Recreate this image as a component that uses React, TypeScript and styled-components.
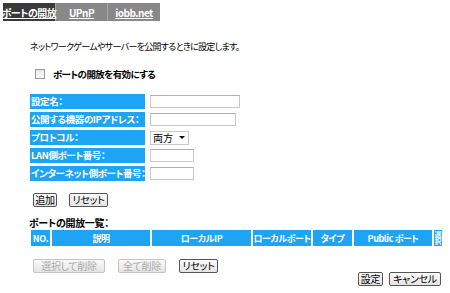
import React from 'react'
import styled, { createGlobalStyle } from 'styled-components'

const GlobalStyle = createGlobalStyle`
  html, body {
    margin: 0;
    padding: 0;
    background: #fff;
    font-family: "Noto Sans CJK JP", "Liberation Sans", sans-serif;
    font-size: 10px;
    font-feature-settings: "palt";
    color: #000;
  }
`

const Page = styled.div`
  width: 450px;
  height: 293px;
  padding: 3px 0 0 3px;
  box-sizing: border-box;
  overflow: hidden;
  white-space: nowrap;
`

const TabBar = styled.div`
  display: flex;
  width: 157px;
  height: 18px;
  background: #888;
`

const Tab = styled.a<{ $active?: boolean; $w: number }>`
  width: ${(p) => p.$w}px;
  display: flex;
  align-items: center;
  justify-content: center;
  background: ${(p) => (p.$active ? '#3a3a3a' : 'transparent')};
  color: #fff;
  font-weight: bold;
  font-size: 10px;
  letter-spacing: -0.5px;
  text-decoration: underline;
  border-right: 1px solid #a8a8a8;
  box-sizing: border-box;
  &:last-child {
    border-right: none;
  }
`

const Content = styled.div`
  padding-left: 27px;
`

const Intro = styled.p`
  margin: 20px 0 0 0;
  font-size: 9px;
  line-height: 12px;
  letter-spacing: -0.7px;
`

const CheckRow = styled.label`
  display: flex;
  align-items: center;
  gap: 8px;
  margin: 15px 0 0 5px;
  font-weight: bold;
  font-size: 9.5px;
  line-height: 12px;
  letter-spacing: -0.6px;
`

const Box = styled.span`
  width: 8px;
  height: 8px;
  border: 1px solid #999;
  background: linear-gradient(#e6e6e6, #fff);
`

const Form = styled.div`
  margin-top: 14px;
  display: grid;
  grid-template-columns: 115px auto;
  row-gap: 3px;
  column-gap: 5px;
  justify-content: start;
`

const Label = styled.div`
  height: 15px;
  background: #1ea4f5;
  color: #fff;
  font-weight: bold;
  font-size: 9.5px;
  letter-spacing: -0.4px;
  line-height: 15px;
  padding-left: 1px;
  overflow: hidden;
`

const Field = styled.div`
  display: flex;
  align-items: center;
`

const Input = styled.span<{ $w: number }>`
  display: block;
  width: ${(p) => p.$w}px;
  height: 13px;
  border: 1px solid #c8c8c8;
  border-top-color: #b0b0b0;
  box-sizing: border-box;
`

const Select = styled.span`
  display: flex;
  align-items: center;
  width: 39px;
  height: 14px;
  border: 1px solid #c8c8c8;
  box-sizing: border-box;
  padding-left: 2px;
  gap: 6px;
  line-height: 12px;
`

const Caret = styled.span`
  width: 0;
  height: 0;
  border-left: 3px solid transparent;
  border-right: 3px solid transparent;
  border-top: 3px solid #000;
`

const ButtonRow = styled.div<{ $gap: number; $mt: number }>`
  display: flex;
  gap: ${(p) => p.$gap}px;
  margin-top: ${(p) => p.$mt}px;
  margin-left: 3px;
`

const Button = styled.span<{ $w: number; $disabled?: boolean }>`
  display: flex;
  align-items: center;
  justify-content: center;
  width: ${(p) => p.$w}px;
  height: 14px;
  box-sizing: border-box;
  border: 1px solid ${(p) => (p.$disabled ? '#c4c4c4' : '#555')};
  border-radius: 2px;
  background: linear-gradient(#fafafa, #e4e4e4);
  color: ${(p) => (p.$disabled ? '#aaa' : '#000')};
  font-size: 10px;
  line-height: 12px;
  letter-spacing: -0.3px;
  overflow: hidden;
`

const SubTitle = styled.div`
  margin-top: 10px;
  margin-left: -1px;
  font-weight: bold;
  line-height: 12px;
  letter-spacing: -0.3px;
`

const Table = styled.div`
  margin-top: 1px;
  margin-left: 1px;
  display: grid;
  grid-template-columns: 19px 98px 99px 58px 39px 78px 8px;
  column-gap: 2px;
`

const Th = styled.div`
  height: 16px;
  background: #1ea4f5;
  color: #fff;
  font-weight: bold;
  font-size: 9px;
  letter-spacing: -0.4px;
  display: flex;
  align-items: center;
  justify-content: center;
  overflow: hidden;
`

const NarrowTh = styled(Th)`
  font-size: 7px;
  line-height: 8px;
  letter-spacing: 0;
  writing-mode: vertical-rl;
`

const Footer = styled.div`
  display: flex;
  justify-content: flex-end;
  gap: 6px;
  margin-top: -1px;
  margin-right: 9px;
`

export default function App() {
  return (
    <Page>
      <GlobalStyle />
      <TabBar>
        <Tab $active $w={53}>ポートの開放</Tab>
        <Tab $w={52}>UPnP</Tab>
        <Tab $w={52}>iobb.net</Tab>
      </TabBar>
      <Content>
        <Intro>ネットワークゲームやサーバーを公開するときに設定します。</Intro>
        <CheckRow>
          <Box />
          ポートの開放を有効にする
        </CheckRow>
        <Form>
          <Label>設定名：</Label>
          <Field><Input $w={90} /></Field>
          <Label>公開する機器のIPアドレス：</Label>
          <Field><Input $w={86} /></Field>
          <Label>プロトコル：</Label>
          <Field>
            <Select>両方<Caret /></Select>
          </Field>
          <Label>LAN側ポート番号：</Label>
          <Field><Input $w={44} /></Field>
          <Label>インターネット側ポート番号：</Label>
          <Field><Input $w={44} /></Field>
        </Form>
        <ButtonRow $gap={12} $mt={12}>
          <Button $w={24}>追加</Button>
          <Button $w={39}>リセット</Button>
        </ButtonRow>
        <SubTitle>ポートの開放一覧：</SubTitle>
        <Table>
          <Th>NO.</Th>
          <Th>説明</Th>
          <Th>ローカルIP</Th>
          <Th>ローカルポート</Th>
          <Th>タイプ</Th>
          <Th>Public ポート</Th>
          <NarrowTh>選択</NarrowTh>
        </Table>
        <ButtonRow $gap={13} $mt={13}>
          <Button $w={72} $disabled>選択して削除</Button>
          <Button $w={48} $disabled>全て削除</Button>
          <Button $w={39}>リセット</Button>
        </ButtonRow>
        <Footer>
          <Button $w={25}>設定</Button>
          <Button $w={52}>キャンセル</Button>
        </Footer>
      </Content>
    </Page>
  )
}
